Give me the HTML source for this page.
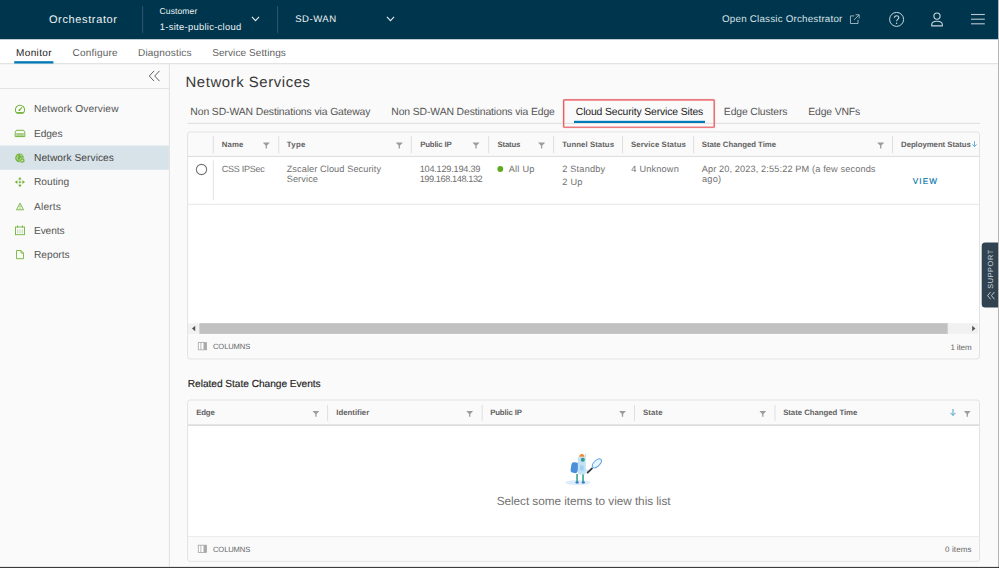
<!DOCTYPE html>
<html lang="en">
<head>
<meta charset="utf-8">
<title>Orchestrator - Network Services</title>
<style>
*{box-sizing:border-box;margin:0;padding:0}
html,body{width:999px;height:568px;overflow:hidden;background:#fafafa;font-family:"Liberation Sans",sans-serif;color:#565656}
.a,.tx,svg{position:absolute}
.tx{white-space:nowrap;text-rendering:geometricPrecision}
.fi{fill:#9c9c9c}
</style>
</head>
<body>
<svg style="left:0;top:0" width="999" height="568" viewBox="0 0 999 568">
<rect x="0" y="0" width="998" height="39.5" fill="#00364d"/>
<rect x="0" y="39.5" width="998" height="23.7" fill="#fff"/>
<rect x="0" y="63.20" width="998.00" height="1" fill="#dcdcdc"/>
<rect x="142.10" y="6" width="1" height="27.00" fill="#2e566a"/>
<rect x="277.10" y="6" width="1" height="27.00" fill="#2e566a"/>
<path d="M251.9 16.9 L255.5 20.6 L259.1 16.9" fill="none" stroke="#e6edf0" stroke-width="1.1"/>
<path d="M386.9 16.9 L390.5 20.6 L394.1 16.9" fill="none" stroke="#e6edf0" stroke-width="1.1"/>
<g transform="translate(849.3 14.2) scale(0.95)"><path d="M5.2 1.8 H1.2 V9.8 H9.2 V5.8 M6.6 0.6 H10.4 V4.4 M10.2 0.8 L5 6" fill="none" stroke="#a9bbc4" stroke-width="0.95"/></g>
<g transform="translate(888.6 11.4)"><circle cx="8" cy="8" r="7" fill="none" stroke="#c9d5db" stroke-width="1"/><path d="M5.8 6.4 C5.8 3.6 10.2 3.6 10.2 6.3 C10.2 8 8 8 8 9.9" fill="none" stroke="#c9d5db" stroke-width="1.1"/><circle cx="8" cy="11.9" r="0.75" fill="#c9d5db"/></g>
<g transform="translate(930 11.6)"><circle cx="7" cy="4.5" r="3.1" fill="none" stroke="#c9d5db" stroke-width="1.1"/><path d="M1.7 14.3 V13 C1.7 10.6 4 9.6 7 9.6 C10 9.6 12.3 10.6 12.3 13 V14.3 Z" fill="none" stroke="#c9d5db" stroke-width="1.1" stroke-linejoin="round"/></g>
<rect x="971" y="13.95" width="13.80" height="1.1" fill="#b9c7ce"/>
<rect x="971" y="18.65" width="13.80" height="1.1" fill="#b9c7ce"/>
<rect x="971" y="23.25" width="13.80" height="1.1" fill="#b9c7ce"/>
<rect x="14.2" y="61.2" width="39.2" height="2.3" fill="#0079b8"/>
<rect x="168.90" y="64.2" width="1" height="502.30" fill="#e0e0e0"/>
<rect x="0" y="88.00" width="169.00" height="1" fill="#e4e4e4"/>
<rect x="0" y="145.5" width="168.9" height="24.3" fill="#d8e3e9"/>
<path transform="translate(148.5 70.5)" d="M5.6 0.4 L0.8 5.5 L5.6 10.6 M11 0.4 L6.2 5.5 L11 10.6" fill="none" stroke="#606060" stroke-width="1"/>
<g transform="translate(14.7 104.4)"><path d="M2.2 8.8 A4.6 4.6 0 1 1 8.4 8.8 Z" fill="none" stroke="#72b43a" stroke-width="1.05" stroke-linejoin="round"/><path d="M2.4 8.3 H8.2" stroke="#72b43a" stroke-width="1.3"/><path d="M4.6 5.9 L7 3.2" stroke="#72b43a" stroke-width="1.1" stroke-linecap="round"/><circle cx="4.7" cy="5.8" r="0.9" fill="#72b43a"/></g>
<g transform="translate(14.7 129.8)"><path d="M0.5 6.8 V2.6 L1.6 0.5 H9 L10.1 2.6 V6.8 Z" fill="none" stroke="#72b43a" stroke-width="1" stroke-linejoin="round"/><rect x="1.5" y="3.2" width="7.6" height="2.9" fill="#72b43a" opacity="0.6"/></g>
<g transform="translate(15 153.4)"><circle cx="4.5" cy="4.5" r="4.3" fill="#72b43a"/><path d="M2.2 2 C3.4 2.6 3 3.8 1.8 4.2 C1.4 5.4 2.6 5.8 3.4 6.6 M5.4 1 C5 2.2 6.4 2.6 7.2 2.2" fill="none" stroke="#e3eedb" stroke-width="0.8"/><circle cx="7.3" cy="7" r="2.6" fill="#72b43a" stroke="#d8e3e9" stroke-width="0.7"/><circle cx="7.3" cy="7" r="1" fill="#cfe3bf"/></g>
<g transform="translate(14.8 177)" fill="#72b43a"><path d="M5.1 0 L6.9 2.5 H3.3 Z"/><path d="M5.1 10.2 L6.9 7.7 H3.3 Z"/><path d="M0 5.1 L2.5 3.3 V6.9 Z"/><path d="M10.2 5.1 L7.7 3.3 V6.9 Z"/><path d="M5.1 2 V8.2 M2 5.1 H8.2" stroke="#72b43a" stroke-width="0.7" opacity="0.6"/><circle cx="5.1" cy="5.1" r="0.9"/></g>
<g transform="translate(16 202.4)"><path d="M4 0.7 L7.5 7.4 H0.5 Z" fill="none" stroke="#72b43a" stroke-width="0.9" stroke-linejoin="round"/><path d="M4 3 V5.2" stroke="#72b43a" stroke-width="0.9"/><circle cx="4" cy="6.2" r="0.5" fill="#72b43a"/></g>
<g transform="translate(15 225.4)"><rect x="0.5" y="1.6" width="9" height="7.7" fill="none" stroke="#72b43a" stroke-width="0.9"/><path d="M2.6 0 V2.2 M7.4 0 V2.2" stroke="#72b43a" stroke-width="0.9"/><path d="M2.7 4 V8 M5 4 V8 M7.3 4 V8" stroke="#72b43a" stroke-width="0.7" opacity="0.6"/></g>
<g transform="translate(16 250)"><path d="M0.5 0.5 H5 L7.5 3 V8.7 H0.5 Z M5 0.5 V3 H7.5" fill="none" stroke="#72b43a" stroke-width="0.9" stroke-linejoin="round"/></g>
<rect x="187.6" y="122.80" width="792.40" height="1" fill="#dddddd"/>
<rect x="574" y="120.8" width="131" height="2.2" fill="#0079b8"/>
<rect x="563.65" y="99.85" width="150.6" height="27.4" rx="0.8" fill="none" stroke="#f8d3d4" stroke-width="2.2"/>
<rect x="563.65" y="99.85" width="150.6" height="27.4" rx="0.8" fill="none" stroke="#e55d61" stroke-width="1.2"/>
<rect x="187.6" y="131.95" width="791.9" height="227.0" rx="2.5" fill="#fff"/>
<path d="M188.1 155.9 V134.4 Q188.1 132.45 190.1 132.45 H977 Q979 132.45 979 134.4 V155.9 Z" fill="#fafafa"/>
<rect x="188.1" y="155.90" width="790.90" height="1" fill="#dbdbdb"/>
<rect x="212.80" y="136" width="1" height="17.20" fill="#dfdfdf"/>
<rect x="278.25" y="136" width="1" height="17.20" fill="#dfdfdf"/>
<rect x="410.80" y="136" width="1" height="17.20" fill="#dfdfdf"/>
<rect x="488.20" y="136" width="1" height="17.20" fill="#dfdfdf"/>
<rect x="553.10" y="136" width="1" height="17.20" fill="#dfdfdf"/>
<rect x="622.00" y="136" width="1" height="17.20" fill="#dfdfdf"/>
<rect x="693.10" y="136" width="1" height="17.20" fill="#dfdfdf"/>
<rect x="892.00" y="136" width="1" height="17.20" fill="#dfdfdf"/>
<rect x="212.80" y="160.5" width="1" height="40.00" fill="#e2e2e2"/>
<rect x="188.1" y="203.80" width="790.90" height="1" fill="#e6e6e6"/>
<circle cx="201.5" cy="169.5" r="5.15" fill="#fff" stroke="#767676" stroke-width="1.1"/>
<circle cx="500.3" cy="169" r="2.9" fill="#5eaa1f"/>
<rect x="188.1" y="323.2" width="790.4" height="10.7" fill="#f1f1f1"/>
<rect x="199.4" y="323.2" width="748.3" height="10.7" fill="#c1c1c1"/>
<path d="M195.2 325.8 V331.2 L192 328.5 Z" fill="#505050"/>
<path d="M972.2 325.8 V331.2 L975.4 328.5 Z" fill="#505050"/>
<path d="M188.1 333.9 H979 V356.5 Q979 358.45 977 358.45 H190.1 Q188.1 358.45 188.1 356.5 Z" fill="#fafafa"/>
<path class="fi" transform="translate(263.1 142.6)" d="M0 0 H6.4 V0.3 L3.85 2.9 V5.8 H2.55 V2.9 L0 0.3 Z"/>
<path class="fi" transform="translate(396.1 142.6)" d="M0 0 H6.4 V0.3 L3.85 2.9 V5.8 H2.55 V2.9 L0 0.3 Z"/>
<path class="fi" transform="translate(472.8 142.6)" d="M0 0 H6.4 V0.3 L3.85 2.9 V5.8 H2.55 V2.9 L0 0.3 Z"/>
<path class="fi" transform="translate(538.4 142.6)" d="M0 0 H6.4 V0.3 L3.85 2.9 V5.8 H2.55 V2.9 L0 0.3 Z"/>
<path class="fi" transform="translate(877.5 142.6)" d="M0 0 H6.4 V0.3 L3.85 2.9 V5.8 H2.55 V2.9 L0 0.3 Z"/>
<path transform="translate(972 141.2) scale(0.8333333333333334 0.8285714285714285)" d="M3 0 V6.2 M0.5 3.9 L3 6.5 L5.5 3.9" fill="none" stroke="#4a9fce" stroke-width="1"/>
<g transform="translate(197.9 342.2)"><rect x="0.4" y="0.4" width="8.2" height="7.2" fill="#fff" stroke="#a4a4a4" stroke-width="0.8"/><rect x="5.6" y="0.4" width="3" height="7.2" fill="#a9a9a9"/><path d="M3 0.4 V7.6" stroke="#a4a4a4" stroke-width="0.8"/></g>
<rect x="187.6" y="131.95" width="791.9" height="227.0" rx="2.5" fill="none" stroke="#e2e2e2"/>
<rect x="187.6" y="400" width="791.9" height="161.4" rx="2.5" fill="#fff"/>
<path d="M188.1 424.3 V402.5 Q188.1 400.5 190.1 400.5 H977 Q979 400.5 979 402.5 V424.3 Z" fill="#fafafa"/>
<rect x="188.1" y="424.25" width="790.90" height="1.7" fill="#dcdcdc"/>
<rect x="327.10" y="404.8" width="1" height="16.00" fill="#dfdfdf"/>
<rect x="481.70" y="404.8" width="1" height="16.00" fill="#dfdfdf"/>
<rect x="634.00" y="404.8" width="1" height="16.00" fill="#dfdfdf"/>
<rect x="774.50" y="404.8" width="1" height="16.00" fill="#dfdfdf"/>
<rect x="188.1" y="536.30" width="790.90" height="1" fill="#e4e4e4"/>
<path d="M188.1 537.3 H979 V558.9 Q979 560.9 977 560.9 H190.1 Q188.1 560.9 188.1 558.9 Z" fill="#fafafa"/>
<path class="fi" transform="translate(312.70000000000005 411)" d="M0 0 H6.4 V0.3 L3.85 2.9 V5.8 H2.55 V2.9 L0 0.3 Z"/>
<path class="fi" transform="translate(466.5 411)" d="M0 0 H6.4 V0.3 L3.85 2.9 V5.8 H2.55 V2.9 L0 0.3 Z"/>
<path class="fi" transform="translate(619.3000000000001 411)" d="M0 0 H6.4 V0.3 L3.85 2.9 V5.8 H2.55 V2.9 L0 0.3 Z"/>
<path class="fi" transform="translate(759.6 411)" d="M0 0 H6.4 V0.3 L3.85 2.9 V5.8 H2.55 V2.9 L0 0.3 Z"/>
<path class="fi" transform="translate(964.1 411)" d="M0 0 H6.4 V0.3 L3.85 2.9 V5.8 H2.55 V2.9 L0 0.3 Z"/>
<path transform="translate(950 409) scale(1.0 1.0)" d="M3 0 V6.2 M0.5 3.9 L3 6.5 L5.5 3.9" fill="none" stroke="#4a9fce" stroke-width="1"/>
<g transform="translate(197.9 544.8)"><rect x="0.4" y="0.4" width="8.2" height="7.2" fill="#fff" stroke="#a4a4a4" stroke-width="0.8"/><rect x="5.6" y="0.4" width="3" height="7.2" fill="#a9a9a9"/><path d="M3 0.4 V7.6" stroke="#a4a4a4" stroke-width="0.8"/></g>
<rect x="187.6" y="400" width="791.9" height="161.4" rx="2.5" fill="none" stroke="#e2e2e2"/>
<g>
<ellipse cx="578" cy="482.6" rx="12.6" ry="2.6" fill="#dcedfa"/>
<rect x="576.3" y="474" width="1.5" height="8.6" fill="#2f9c8c"/><rect x="582.3" y="474" width="1.5" height="8.6" fill="#2f9c8c"/>
<rect x="575.4" y="481.6" width="3.4" height="1.8" rx="0.8" fill="#3b72c4"/><rect x="581.6" y="481.6" width="3.4" height="1.8" rx="0.8" fill="#3b72c4"/>
<rect x="571" y="462.4" width="7.2" height="10.6" rx="2.6" fill="#4a8fd8" transform="rotate(8 574.6 467.7)"/>
<rect x="577.8" y="456.4" width="8" height="18.2" rx="2.2" fill="#c3e2f6"/>
<rect x="580" y="465.5" width="3.6" height="5" fill="#9fd0f0"/>
<circle cx="582.8" cy="459.8" r="2" fill="#2f9c8c"/>
<path d="M579.2 456.8 C579.4 453.6 582.6 453.2 584.4 455.6 L584.4 456.8 Z" fill="#f0892b"/>
<path d="M585.6 453.8 V457.2" stroke="#9cc9ea" stroke-width="0.6"/>
<path d="M585 469.6 L588 471.4" stroke="#bfe0f5" stroke-width="1.6" stroke-linecap="round"/>
<path d="M587.6 472.6 L592 468.4" stroke="#30343c" stroke-width="1.8" stroke-linecap="round"/>
<ellipse cx="596.9" cy="463.3" rx="5.6" ry="2.9" transform="rotate(-45 596.9 463.3)" fill="#eaf5fd" stroke="#5aa5e6" stroke-width="1"/>
</g>
<path d="M998 242.5 H985.2 Q981.7 242.5 981.7 246 V304.1 Q981.7 307.6 985.2 307.6 H998 Z" fill="#314351"/>
<path transform="translate(987 291.6)" d="M3.6 0.4 L0.6 4 L3.6 7.6 M7.4 0.4 L4.4 4 L7.4 7.6" fill="none" stroke="#dfe5e9" stroke-width="0.8"/>
<rect x="998" y="0" width="1" height="568" fill="#b4b4b4"/>
<rect x="0" y="566.9" width="999" height="1.2" fill="#3c3c3c"/>
</svg>
<div class="tx" style="left:990.5px;top:268.6px;width:0;height:0"><div class="tx" style="left:-20px;top:-4px;width:40px;height:8px;font-size:7.4px;line-height:8px;color:#cbd5db;letter-spacing:0.55px;text-align:center;transform:rotate(-90deg)">SUPPORT</div></div>
<div class="tx" style="left:48.93px;top:14.69px;font-size:11.0px;line-height:11.0px;letter-spacing:0.632px;color:#eef2f4;font-weight:400">Orchestrator</div>
<div class="tx" style="left:159.50px;top:6.52px;font-size:8.6px;line-height:8.6px;letter-spacing:0.075px;color:#eef2f4;font-weight:400">Customer</div>
<div class="tx" style="left:159.84px;top:22.04px;font-size:9.4px;line-height:9.4px;letter-spacing:0.293px;color:#eef2f4;font-weight:400">1-site-public-cloud</div>
<div class="tx" style="left:295.23px;top:15.07px;font-size:9.6px;line-height:9.6px;letter-spacing:0.480px;color:#eef2f4;font-weight:400">SD-WAN</div>
<div class="tx" style="left:722.01px;top:15.00px;font-size:9.8px;line-height:9.8px;letter-spacing:0.206px;color:#d6e0e5;font-weight:400">Open Classic Orchestrator</div>
<div class="tx" style="left:16.10px;top:49.23px;font-size:10.0px;line-height:10.0px;letter-spacing:0.340px;color:#1a1a1a;font-weight:400">Monitor</div>
<div class="tx" style="left:72.60px;top:49.23px;font-size:10.0px;line-height:10.0px;letter-spacing:0.193px;color:#5e5e5e;font-weight:400">Configure</div>
<div class="tx" style="left:138.00px;top:49.23px;font-size:10.0px;line-height:10.0px;letter-spacing:0.180px;color:#5e5e5e;font-weight:400">Diagnostics</div>
<div class="tx" style="left:212.20px;top:49.23px;font-size:10.0px;line-height:10.0px;letter-spacing:0.089px;color:#5e5e5e;font-weight:400">Service Settings</div>
<div class="tx" style="left:33.99px;top:104.57px;font-size:10.2px;line-height:10.2px;letter-spacing:0.124px;color:#565656;font-weight:400">Network Overview</div>
<div class="tx" style="left:33.99px;top:129.97px;font-size:10.2px;line-height:10.2px;letter-spacing:-0.093px;color:#565656;font-weight:400">Edges</div>
<div class="tx" style="left:33.99px;top:154.37px;font-size:10.2px;line-height:10.2px;letter-spacing:0.043px;color:#444;font-weight:400">Network Services</div>
<div class="tx" style="left:33.99px;top:177.67px;font-size:10.2px;line-height:10.2px;letter-spacing:-0.001px;color:#565656;font-weight:400">Routing</div>
<div class="tx" style="left:33.99px;top:203.07px;font-size:10.2px;line-height:10.2px;letter-spacing:0.174px;color:#565656;font-weight:400">Alerts</div>
<div class="tx" style="left:33.99px;top:227.37px;font-size:10.2px;line-height:10.2px;letter-spacing:-0.128px;color:#565656;font-weight:400">Events</div>
<div class="tx" style="left:33.99px;top:250.77px;font-size:10.2px;line-height:10.2px;letter-spacing:0.008px;color:#565656;font-weight:400">Reports</div>
<div class="tx" style="left:185.56px;top:75.59px;font-size:14.9px;line-height:14.9px;letter-spacing:0.572px;color:#383838;font-weight:400">Network Services</div>
<div class="tx" style="left:190.37px;top:108.40px;font-size:10.4px;line-height:10.4px;letter-spacing:-0.109px;color:#565656;font-weight:400">Non SD-WAN Destinations via Gateway</div>
<div class="tx" style="left:391.27px;top:108.40px;font-size:10.4px;line-height:10.4px;letter-spacing:-0.112px;color:#565656;font-weight:400">Non SD-WAN Destinations via Edge</div>
<div class="tx" style="left:575.77px;top:108.40px;font-size:10.4px;line-height:10.4px;letter-spacing:-0.132px;color:#1a1a1a;font-weight:400">Cloud Security Service Sites</div>
<div class="tx" style="left:723.87px;top:108.40px;font-size:10.4px;line-height:10.4px;letter-spacing:-0.144px;color:#565656;font-weight:400">Edge Clusters</div>
<div class="tx" style="left:808.37px;top:108.40px;font-size:10.4px;line-height:10.4px;letter-spacing:-0.176px;color:#565656;font-weight:400">Edge VNFs</div>
<div class="tx" style="left:221.75px;top:140.60px;font-size:7.8px;line-height:7.8px;letter-spacing:0.151px;color:#636363;font-weight:700">Name</div>
<div class="tx" style="left:286.75px;top:140.60px;font-size:7.8px;line-height:7.8px;letter-spacing:0.359px;color:#636363;font-weight:700">Type</div>
<div class="tx" style="left:420.25px;top:140.60px;font-size:7.8px;line-height:7.8px;letter-spacing:-0.192px;color:#636363;font-weight:700">Public IP</div>
<div class="tx" style="left:497.45px;top:140.60px;font-size:7.8px;line-height:7.8px;letter-spacing:-0.168px;color:#636363;font-weight:700">Status</div>
<div class="tx" style="left:562.35px;top:140.60px;font-size:7.8px;line-height:7.8px;letter-spacing:0.060px;color:#636363;font-weight:700">Tunnel Status</div>
<div class="tx" style="left:630.95px;top:140.60px;font-size:7.8px;line-height:7.8px;letter-spacing:0.096px;color:#636363;font-weight:700">Service Status</div>
<div class="tx" style="left:701.75px;top:140.60px;font-size:7.8px;line-height:7.8px;letter-spacing:-0.030px;color:#636363;font-weight:700">State Changed Time</div>
<div class="tx" style="left:901.05px;top:140.60px;font-size:7.8px;line-height:7.8px;letter-spacing:-0.051px;color:#636363;font-weight:700">Deployment Status</div>
<div class="tx" style="left:221.67px;top:164.68px;font-size:9.0px;line-height:9.0px;letter-spacing:-0.253px;color:#707070;font-weight:400">CSS IPSec</div>
<div class="tx" style="left:286.66px;top:164.51px;font-size:9.2px;line-height:9.2px;letter-spacing:0.091px;color:#707070;font-weight:400">Zscaler Cloud Security</div>
<div class="tx" style="left:286.66px;top:175.01px;font-size:9.2px;line-height:9.2px;letter-spacing:0.115px;color:#707070;font-weight:400">Service</div>
<div class="tx" style="left:419.66px;top:164.51px;font-size:9.2px;line-height:9.2px;letter-spacing:-0.234px;color:#707070;font-weight:400">104.129.194.39</div>
<div class="tx" style="left:419.66px;top:175.01px;font-size:9.2px;line-height:9.2px;letter-spacing:-0.425px;color:#707070;font-weight:400">199.168.148.132</div>
<div class="tx" style="left:508.66px;top:164.51px;font-size:9.2px;line-height:9.2px;letter-spacing:0.262px;color:#707070;font-weight:400">All Up</div>
<div class="tx" style="left:562.26px;top:164.51px;font-size:9.2px;line-height:9.2px;letter-spacing:0.192px;color:#707070;font-weight:400">2 Standby</div>
<div class="tx" style="left:562.26px;top:178.21px;font-size:9.2px;line-height:9.2px;letter-spacing:0.269px;color:#707070;font-weight:400">2 Up</div>
<div class="tx" style="left:631.36px;top:164.51px;font-size:9.2px;line-height:9.2px;letter-spacing:0.182px;color:#707070;font-weight:400">4 Unknown</div>
<div class="tx" style="left:701.66px;top:164.51px;font-size:9.2px;line-height:9.2px;letter-spacing:0.125px;color:#707070;font-weight:400">Apr 20, 2023, 2:55:22 PM (a few seconds</div>
<div class="tx" style="left:702.06px;top:174.81px;font-size:9.2px;line-height:9.2px;letter-spacing:0.212px;color:#707070;font-weight:400">ago)</div>
<div class="tx" style="left:912.63px;top:178.36px;font-size:8.2px;line-height:8.2px;letter-spacing:1.167px;color:#0072a3;font-weight:400;-webkit-text-stroke:0.12px #0072a3">VIEW</div>
<div class="tx" style="left:212.97px;top:342.57px;font-size:7.6px;line-height:7.6px;letter-spacing:-0.117px;color:#666;font-weight:400">COLUMNS</div>
<div class="tx" style="left:950.44px;top:343.93px;font-size:8.0px;line-height:8.0px;letter-spacing:-0.135px;color:#666;font-weight:400">1 item</div>
<div class="tx" style="left:187.79px;top:380.17px;font-size:10.2px;line-height:10.2px;letter-spacing:-0.051px;color:#222;font-weight:400;-webkit-text-stroke:0.15px #222">Related State Change Events</div>
<div class="tx" style="left:196.15px;top:408.60px;font-size:7.8px;line-height:7.8px;letter-spacing:-0.120px;color:#636363;font-weight:700">Edge</div>
<div class="tx" style="left:336.35px;top:408.60px;font-size:7.8px;line-height:7.8px;letter-spacing:-0.004px;color:#636363;font-weight:700">Identifier</div>
<div class="tx" style="left:490.15px;top:408.60px;font-size:7.8px;line-height:7.8px;letter-spacing:-0.129px;color:#636363;font-weight:700">Public IP</div>
<div class="tx" style="left:642.95px;top:408.60px;font-size:7.8px;line-height:7.8px;letter-spacing:0.156px;color:#636363;font-weight:700">State</div>
<div class="tx" style="left:783.15px;top:408.60px;font-size:7.8px;line-height:7.8px;letter-spacing:-0.036px;color:#636363;font-weight:700">State Changed Time</div>
<div class="tx" style="left:496.67px;top:496.21px;font-size:11.8px;line-height:11.8px;letter-spacing:-0.054px;color:#727272;font-weight:400">Select some items to view this list</div>
<div class="tx" style="left:212.97px;top:545.67px;font-size:7.6px;line-height:7.6px;letter-spacing:-0.117px;color:#666;font-weight:400">COLUMNS</div>
<div class="tx" style="left:944.94px;top:546.33px;font-size:8.0px;line-height:8.0px;letter-spacing:0.137px;color:#666;font-weight:400">0 items</div>
</body>
</html>
